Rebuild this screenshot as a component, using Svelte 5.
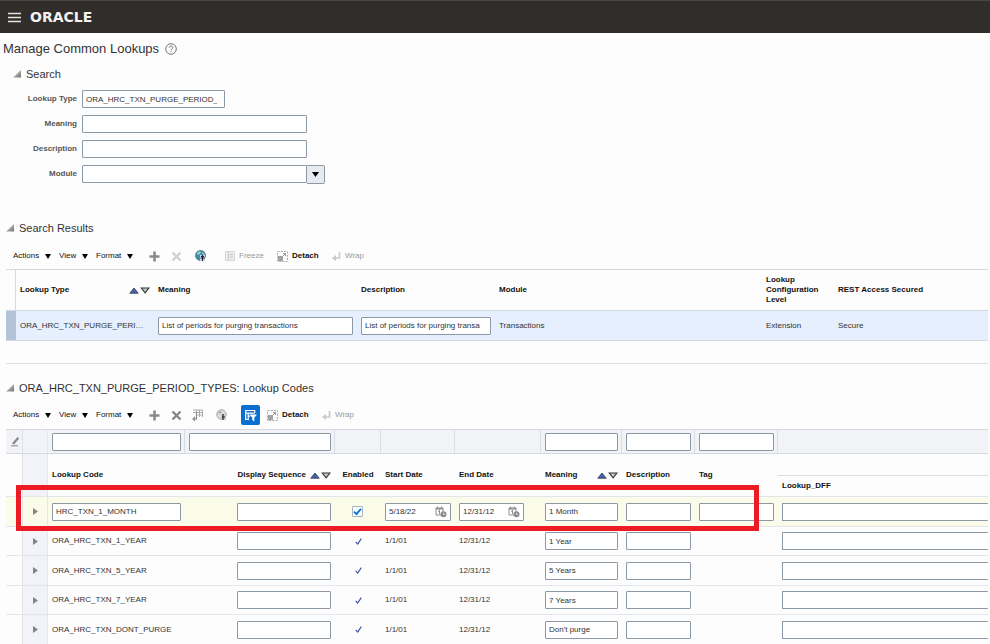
<script lang="ts">
  interface LookupCode {
    code: string;
    start: string;
    end: string;
    meaning: string;
    editable?: boolean;
  }

  let lookupType = $state('ORA_HRC_TXN_PURGE_PERIOD_TYPES');
  let resultMeaning = $state('List of periods for purging transactions');
  let resultDescription = $state('List of periods for purging transactions');

  const codes: LookupCode[] = $state([
    { code: 'HRC_TXN_1_MONTH', start: '5/18/22', end: '12/31/12', meaning: '1 Month', editable: true },
    { code: 'ORA_HRC_TXN_1_YEAR', start: '1/1/01', end: '12/31/12', meaning: '1 Year' },
    { code: 'ORA_HRC_TXN_5_YEAR', start: '1/1/01', end: '12/31/12', meaning: '5 Years' },
    { code: 'ORA_HRC_TXN_7_YEAR', start: '1/1/01', end: '12/31/12', meaning: '7 Years' },
    { code: 'ORA_HRC_TXN_DONT_PURGE', start: '1/1/01', end: '12/31/12', meaning: "Don't purge" }
  ]);

  const menus = ['Actions', 'View', 'Format'];
</script>

{#snippet disclose()}
  <button class="disclose" aria-label="Collapse">
    <svg width="8" height="8" viewBox="0 0 8 8">
      <defs>
        <linearGradient id="fold" x1="0" y1="0" x2="1" y2="1">
          <stop offset="0.3" stop-color="#c4c4c4" />
          <stop offset="1" stop-color="#6e6e6e" />
        </linearGradient>
      </defs>
      <path d="M8 0V7.5H0z" fill="url(#fold)" />
    </svg>
  </button>
{/snippet}

{#snippet sort()}
  <svg class="sort" width="21" height="7" viewBox="0 0 21 7">
    <path d="M.8 6.2 5 1l4.200 5.200z" fill="#3f63b5" stroke="#3c4352" stroke-width=".9" />
    <path d="M12.300 1h7.600L16.100 5.900z" fill="#c9c9c9" stroke="#333" stroke-width="1.100" />
  </svg>
{/snippet}

{#snippet menuButtons()}
  {#each menus as m}
    <button class="menu">
      {m}
      <svg width="6" height="5" viewBox="0 0 6 5"><path d="M0 0h6L3 5z" fill="#000" /></svg>
    </button>
  {/each}
{/snippet}

{#snippet plus()}
  <button class="icon" aria-label="Create">
    <svg width="11" height="11" viewBox="0 0 11 11"><path d="M5.500.500v10M.500 5.500h10" stroke="#8a8a8a" stroke-width="2.600" /></svg>
  </button>
{/snippet}

{#snippet cross(color: string)}
  <button class="icon" aria-label="Delete">
    <svg width="11" height="11" viewBox="0 0 11 11"><path d="M1.500 1.500l8 8M9.500 1.500l-8 8" stroke={color} stroke-width="2.300" /></svg>
  </button>
{/snippet}

{#snippet detach()}
  <button class="tool strong">
    <svg width="11" height="11" viewBox="0 0 11 11">
      <rect x=".5" y=".5" width="10" height="10" fill="none" stroke="#a8a8a8" stroke-dasharray="2 1.300" />
      <rect x="1" y="5" width="5" height="5" fill="#a2a2a2" />
      <path d="M5.500 5.500 8.500 2.500M6 2.500h2.500V5" fill="none" stroke="#999" />
    </svg>
    Detach
  </button>
{/snippet}

{#snippet wrap()}
  <button class="tool" disabled>
    <svg width="9" height="9" viewBox="0 0 9 9">
      <path d="M7.500 0v6H3" fill="none" stroke="#c9c9c9" stroke-width="1.600" />
      <path d="M4 3v6L0 6z" fill="#c9c9c9" />
    </svg>
    Wrap
  </button>
{/snippet}

{#snippet calendar()}
  <button class="cal" aria-label="Select Date">
    <svg width="12" height="12" viewBox="0 0 12 12">
      <path d="M1 2.500h7V9H1z" fill="#fff" stroke="#8f8f8f" />
      <path d="M1 2h7v1H1zM2.500.500v2M6.500.500v2" fill="#8f8f8f" stroke="#8f8f8f" />
      <path d="M4.500 4v4M3 5.500l1.500-1" stroke="#8f8f8f" fill="none" />
      <circle cx="8.500" cy="8.300" r="3" fill="#8a8a8a" />
      <path d="M8.500 6.600v1.900h1.700" fill="none" stroke="#eee" stroke-width=".8" />
    </svg>
  </button>
{/snippet}

<header class="topbar">
  <button class="burger" aria-label="Navigator">
    <svg width="13" height="11" viewBox="0 0 13 11"><path d="M0 1.500h13M0 5.500h13M0 9.500h13" stroke="#e6e4e2" stroke-width="1.400" /></svg>
  </button>
  <span class="logo">ORACLE</span>
</header>

<main>
  <h1>
    Manage Common Lookups
    <button class="icon" aria-label="Help">
      <svg width="12" height="12" viewBox="0 0 12 12">
        <circle cx="6" cy="6" r="5.300" fill="none" stroke="#666" stroke-width=".9" />
        <path d="M4.300 4.700c0-2.300 3.500-2.200 3.500-.1 0 1.300-1.700 1.300-1.700 2.700M6.100 8.200v1.100" fill="none" stroke="#666" stroke-width=".9" />
      </svg>
    </button>
  </h1>

  <section class="search">
    <h2 class="nested">{@render disclose()} Search</h2>
    <form class="fields">
      <label for="type">Lookup Type</label>
      <input id="type" class="short" bind:value={lookupType} />
      <label for="meaning">Meaning</label>
      <input id="meaning" />
      <label for="description">Description</label>
      <input id="description" />
      <label for="module">Module</label>
      <div class="combo">
        <input id="module" />
        <button type="button" aria-label="Search Module">
          <svg width="7" height="5" viewBox="0 0 7 5"><path d="M0 0h7L3.500 5z" fill="#000" /></svg>
        </button>
      </div>
    </form>
  </section>

  <section class="results">
    <h2>{@render disclose()} Search Results</h2>
    <div class="toolbar results-bar">
      {@render menuButtons()}
      {@render plus()}
      {@render cross('#cfcfcf')}
      <button class="icon" aria-label="Translate">
        <svg width="11" height="12" viewBox="0 0 11 12">
          <circle cx="5.500" cy="5.500" r="5" fill="#3f8cae" stroke="#47606e" stroke-width=".7" />
          <path d="M1.500 3.500 4 1l2 1-1 2-2 1zM7 2l2 1 .5 2-2-.5z" fill="#8ed0c4" />
          <path d="M5 5h5v6H5z" fill="#c3d7e0" />
          <path d="M7.500 5v6M5.500 8h4.500M6 6.500h3" stroke="#223" stroke-width="1.100" />
        </svg>
      </button>
      <button class="tool" disabled>
        <svg width="10" height="10" viewBox="0 0 10 10">
          <path d="M.5.500h9v9h-9z" fill="#ededed" stroke="#d6d6d6" />
          <path d="M3.500 1v8M5 3.500h3M5 6h3" stroke="#c6c6c6" />
        </svg>
        Freeze
      </button>
      {@render detach()}
      {@render wrap()}
    </div>
    <div class="grid">
      <table class="types">
        <colgroup>
          <col class="sel" /><col class="type" /><col class="mean" /><col class="desc" />
          <col class="mod" /><col class="level" /><col />
        </colgroup>
        <thead>
          <tr>
            <td></td>
            <th><span class="sortable">Lookup Type {@render sort()}</span></th>
            <th>Meaning</th>
            <th>Description</th>
            <th>Module</th>
            <th>Lookup Configuration Level</th>
            <th>REST Access Secured</th>
          </tr>
        </thead>
        <tbody>
          <tr>
            <td class="handle"></td>
            <td class="clip">{lookupType}</td>
            <td><input aria-label="Meaning" bind:value={resultMeaning} /></td>
            <td><input aria-label="Description" class="tight" bind:value={resultDescription} /></td>
            <td>Transactions</td>
            <td>Extension</td>
            <td>Secure</td>
          </tr>
        </tbody>
      </table>
    </div>
  </section>

  <section class="codes">
    <h2>{@render disclose()} ORA_HRC_TXN_PURGE_PERIOD_TYPES: Lookup Codes</h2>
    <div class="toolbar codes-bar">
      {@render menuButtons()}
      {@render plus()}
      {@render cross('#858585')}
      <button class="icon" aria-label="Move">
        <svg width="12" height="12" viewBox="0 0 12 12">
          <path d="M1 1h10M1 3.500h10M4.500 1v3M7.500 1v7M10.500 1v7M5.500 6h5.500" fill="none" stroke="#a5a5a5" stroke-width=".9" />
          <path d="M4.500 4v6H1M3 8l-2 2 2 2" fill="none" stroke="#888" stroke-width="1.100" />
        </svg>
      </button>
      <button class="icon" aria-label="Translate">
        <svg width="11" height="12" viewBox="0 0 11 12">
          <circle cx="5.500" cy="5.500" r="4.700" fill="#dedede" stroke="#a0a0a0" />
          <path d="M2 3.500 4 2l2 1-2 2z" fill="#aaa" />
          <path d="M5 5h5v6H5z" fill="#ccc" />
          <path d="M7 5v6M6 8h3" stroke="#222" stroke-width="1.200" />
        </svg>
      </button>
      <button class="qbe" aria-label="Query By Example" aria-pressed="true">
        <svg width="13" height="13" viewBox="0 0 13 13">
          <path d="M5 10.500H1.700v-9h9V4M1.700 4.200h9M4.200 4v6M4.200 7.200h2" fill="none" stroke="#fff" stroke-width="1.200" />
          <path d="M5.500 5.500H13L10.300 8.800v3.700L8.300 11V8.800z" fill="#fff" />
        </svg>
      </button>
      {@render detach()}
      {@render wrap()}
    </div>
    <div class="grid">
      <table class="lookups">
        <colgroup>
          <col class="c-head" /><col class="c-open" /><col class="c-code" /><col class="c-seq" />
          <col class="c-on" /><col class="c-start" /><col class="c-end" /><col class="c-mean" />
          <col class="c-desc" /><col class="c-tag" /><col />
        </colgroup>
        <thead>
          <tr class="filter">
            <td class="pencil">
              <svg width="10" height="11" viewBox="0 0 10 11">
                <path d="M2 7.500 7.500 1l1.700 1.500L4 8.500z" fill="#888" />
                <path d="M1 9.800h7" stroke="#888" />
              </svg>
            </td>
            <td class="open"></td>
            <td><input aria-label="Filter Lookup Code" /></td>
            <td><input aria-label="Filter Display Sequence" /></td>
            <td></td>
            <td></td>
            <td></td>
            <td><input aria-label="Filter Meaning" /></td>
            <td><input aria-label="Filter Description" /></td>
            <td><input aria-label="Filter Tag" /></td>
            <td></td>
          </tr>
          <tr class="names">
            <td rowspan="2"></td>
            <td class="open" rowspan="2"></td>
            <th rowspan="2">Lookup Code</th>
            <th rowspan="2"><span class="sortable end">Display Sequence {@render sort()}</span></th>
            <th class="mid" rowspan="2">Enabled</th>
            <th rowspan="2">Start Date</th>
            <th rowspan="2">End Date</th>
            <th rowspan="2"><span class="sortable">Meaning {@render sort()}</span></th>
            <th rowspan="2">Description</th>
            <th rowspan="2">Tag</th>
            <td></td>
          </tr>
          <tr class="names">
            <th class="dff">Lookup_DFF</th>
          </tr>
        </thead>
        <tbody>
          {#each codes as row}
            <tr class:current={row.editable}>
              <td></td>
              <td class="open">
                <button class="icon" aria-label="Expand {row.code}">
                  <svg width="5" height="7" viewBox="0 0 5 7"><path d="M0 0l5 3.500L0 7z" fill="#858585" /></svg>
                </button>
              </td>
              <td>
                {#if row.editable}
                  <input aria-label="Lookup Code" bind:value={row.code} />
                {:else}
                  {row.code}
                {/if}
              </td>
              <td class="seq"><input aria-label="Display Sequence" /></td>
              <td class="mid">
                {#if row.editable}
                  <input type="checkbox" aria-label="Enabled" checked />
                {:else}
                  <svg width="7" height="7" viewBox="0 0 7 7"><path d="M.7 3.800 2.700 6 6.300.600" fill="none" stroke="#4458a6" stroke-width="1.200" /></svg>
                {/if}
              </td>
              {#each ['start', 'end'] as const as key}
                <td class="date-{key}">
                  {#if row.editable}
                    <span class="date">
                      <input aria-label="{key} date" bind:value={row[key]} />
                      {@render calendar()}
                    </span>
                  {:else}
                    {row[key]}
                  {/if}
                </td>
              {/each}
              <td><input aria-label="Meaning" bind:value={row.meaning} /></td>
              <td><input aria-label="Description" /></td>
              <td>
                {#if row.editable}<input aria-label="Tag" />{/if}
              </td>
              <td class="dff"><input aria-label="Lookup_DFF" /></td>
            </tr>
          {/each}
        </tbody>
      </table>
    </div>
    <div class="callout"></div>
  </section>
</main>

<style>
  :global(body) {
    background: #fdfdfd;
    color: #333;
    font: 8px/10px 'Liberation Sans', Arial, sans-serif;
    overflow-x: hidden;
  }
  button {
    display: flex;
    align-items: center;
    padding: 0;
    border: 0;
    background: none;
    color: inherit;
    font: inherit;
  }
  svg {
    display: block;
    flex: none;
  }
  input {
    box-sizing: border-box;
    display: block;
    width: 100%;
    height: 18px;
    padding: 0 3px;
    border: 1px solid #8c98a3;
    border-radius: 1px;
    background: #fff;
    color: #333;
    font: inherit;
  }

  .topbar {
    box-sizing: border-box;
    display: flex;
    align-items: center;
    gap: 9px;
    height: 33px;
    padding-left: 8px;
    border-top: 1px solid #4a4644;
    background: #312d2a;
  }
  .logo {
    color: #f4f3f2;
    font: bold 14px/16px 'DejaVu Sans', sans-serif;
  }

  h1,
  h2 {
    display: flex;
    align-items: center;
    margin: 0;
    color: #333;
    font-weight: normal;
  }
  h1 {
    gap: 6px;
    height: 32px;
    padding-left: 3px;
    font-size: 13px;
  }
  h2 {
    gap: 5px;
    height: 18px;
    padding-left: 6px;
    font-size: 11px;
  }
  .nested {
    padding-left: 13px;
  }

  .search {
    height: 154px;
  }
  .fields {
    display: grid;
    grid-template-columns: 77px 225px;
    grid-auto-rows: 18px;
    gap: 7px 5px;
    align-items: center;
    margin-top: 7px;
  }
  .fields label {
    color: #555;
    font-weight: bold;
    text-align: right;
  }
  .fields .short {
    width: 143px;
    padding-right: 7px;
  }
  .combo {
    display: flex;
    width: 243px;
  }
  .combo button {
    justify-content: center;
    flex: none;
    width: 18px;
    height: 19px;
    border: 1px solid #8c98a3;
    border-left: 0;
    border-radius: 0 2px 2px 0;
    background: #e7eaf0;
  }

  .toolbar {
    display: grid;
    align-items: center;
    justify-items: start;
    height: 20px;
    padding-left: 13px;
    color: #111;
  }
  .results-bar {
    grid-template-columns: 46px 37px 53px 22px 24px 30px 52px 55px auto;
    margin: 9px 0 3px;
  }
  .codes-bar {
    grid-template-columns: 46px 37px 53px 22px 21px 24px 25px 26px 55px auto;
    margin: 8px 0 4px;
  }
  .menu {
    gap: 6px;
  }
  .tool {
    gap: 4px;
  }
  .tool:disabled {
    color: #999;
  }
  .strong {
    color: #111;
    font-weight: bold;
  }
  .qbe {
    justify-content: center;
    width: 19px;
    height: 20px;
    border-radius: 2px;
    background: #0b6fd0;
  }

  .grid {
    margin: 0 2px 0 6px;
    overflow: hidden;
  }
  table {
    width: 100%;
    border-collapse: separate;
    border-spacing: 0;
    table-layout: fixed;
  }
  td,
  th {
    box-sizing: border-box;
    padding: 0 4px;
    text-align: left;
  }
  th {
    color: #111;
  }
  .sortable {
    display: flex;
    align-items: center;
    justify-content: space-between;
  }
  .sortable.end {
    justify-content: flex-end;
    gap: 4px;
  }

  .results {
    height: 160px;
  }
  .results .grid {
    box-sizing: border-box;
    height: 95px;
    border-top: 1px solid #d5d8dd;
    border-bottom: 1px solid #dfdfdf;
  }
  .sel { width: 10px; }
  .type { width: 138px; }
  .mean { width: 203px; }
  .desc { width: 138px; }
  .mod { width: 267px; }
  .level { width: 72px; }
  .types thead tr {
    height: 40px;
  }
  .types thead td {
    border-right: 1px solid #d6dbe3;
  }
  .types tbody td {
    border-top: 1px solid #d3dae4;
    border-bottom: 1px solid #d3dae4;
    background: #e5effd;
  }
  .types tbody .handle {
    background: #b3c4d6;
  }
  .types .clip {
    padding-right: 8px;
    overflow: hidden;
    text-overflow: ellipsis;
    white-space: nowrap;
  }
  .tight {
    padding-right: 10px;
  }

  .codes {
    position: relative;
  }
  .c-head { width: 16px; }
  .c-open { width: 26px; }
  .c-code { width: 137px; }
  .c-seq { width: 150px; }
  .c-on { width: 46px; }
  .c-start { width: 74px; }
  .c-end { width: 86px; }
  .c-mean { width: 81px; }
  .c-desc { width: 73px; }
  .c-tag { width: 83px; }
  .filter {
    height: 25px;
    background: #f2f3f7;
  }
  .filter td {
    border-top: 1px solid #d5d9e1;
    border-bottom: 1px solid #d5d9e1;
    border-right: 1px solid #d9dde6;
  }
  .filter td:has(input) {
    padding-right: 3px;
  }
  .filter td:last-child {
    border-right: 0;
  }
  .names {
    height: 21px;
  }
  .names .dff {
    border-top: 1px solid #dcdcdc;
  }
  .lookups .open {
    border-left: 1px solid #dfe2ea;
    border-right: 1px solid #e3e6ee;
    background: #f2f3f8;
  }
  .lookups .open .icon {
    margin: 0 auto;
  }
  .lookups .pencil {
    border-right: 0;
  }
  tbody tr {
    height: 29px;
  }
  tbody tr:nth-child(odd) {
    height: 30px;
  }
  .types tbody tr:first-child {
    height: 31px;
  }
  .lookups tbody td {
    border-top: 1px solid #e3e5ea;
  }
  .lookups tbody .dff {
    padding-right: 0;
  }
  .dff input {
    border-right: 0;
  }
  .lookups .current,
  .lookups .current .open {
    background: #fbfbea;
  }
  .lookups .mid {
    padding: 0;
    text-align: center;
  }
  .mid svg {
    margin: 0 auto;
  }
  .seq input {
    width: 94px;
    margin-left: auto;
  }
  .lookups .date-end {
    padding-right: 17px;
  }
  .date {
    display: flex;
    border: 1px solid #8c98a3;
    border-radius: 1px;
    background: #fff;
  }
  .date input {
    height: 16px;
    min-width: 0;
    border: 0;
  }
  .cal {
    padding-right: 3px;
  }
  input[type='checkbox'] {
    appearance: none;
    width: 11px;
    height: 11px;
    margin: 0 auto;
    padding: 0;
    border-color: #a5b3c2;
    background: #fff url("data:image/svg+xml,%3Csvg xmlns='http://www.w3.org/2000/svg' viewBox='0 0 9 9'%3E%3Cpath d='M1 4.700 3.400 7.200 8 1.800' fill='none' stroke='%230b6fd0' stroke-width='1.800'/%3E%3C/svg%3E");
  }
  .lookups .mid:has(input) {
    padding-right: 2px;
  }
  .callout {
    position: absolute;
    top: 106px;
    left: 16px;
    box-sizing: border-box;
    width: 743px;
    height: 46px;
    border: 5px solid #ed1c24;
    pointer-events: none;
  }
</style>
